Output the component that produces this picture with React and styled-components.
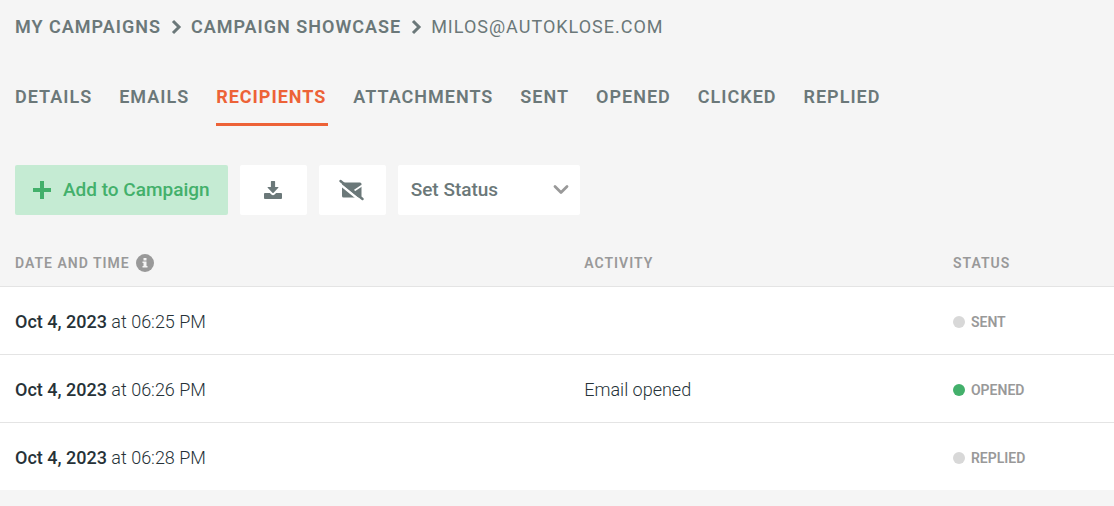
import React, { useState } from "react";
import styled, { createGlobalStyle } from "styled-components";

const GlobalStyle = createGlobalStyle`
  * {
    box-sizing: border-box;
  }

  body {
    margin: 0;
    background: #f5f5f5;
    color: #263238;
    font-family: Roboto, "Liberation Sans", sans-serif;
    font-size: 18px;
    line-height: 24px;
  }
`;

const Breadcrumbs = styled.nav`
  display: flex;
  align-items: center;
  gap: 8px;
  padding: 15px 15px 0;
  color: #6b7879;
  letter-spacing: 1px;
  text-transform: uppercase;
`;

const Crumb = styled.a`
  color: inherit;
  font-weight: 600;
  text-decoration: none;
`;

const Tabs = styled.nav`
  display: flex;
  gap: 25px;
  padding: 40px 15px 0;
`;

const Tab = styled.a`
  padding: 6px 2px 14px 0;
  border-bottom: 3px solid ${(props) => (props.$active ? "#ed6237" : "transparent")};
  color: ${(props) => (props.$active ? "#ed6237" : "#6b7879")};
  font-weight: ${(props) => (props.$active ? 700 : 600)};
  letter-spacing: 1px;
  text-decoration: none;
  text-transform: uppercase;
`;

const Toolbar = styled.div`
  display: flex;
  gap: 12px;
  padding: 39px 15px 0;
`;

const Button = styled.button`
  display: flex;
  align-items: center;
  justify-content: center;
  gap: 12px;
  height: 50px;
  padding: 0 18px;
  border: 0;
  border-radius: 2px;
  background: #c5ebd3;
  color: #43b06b;
  font: inherit;
  font-size: 19px;
  font-weight: 500;
  cursor: pointer;
`;

const IconButton = styled(Button)`
  width: 67px;
  background: #fff;
  color: #6b7879;
`;

const SelectBox = styled.div`
  position: relative;
  width: 182px;

  svg {
    position: absolute;
    top: 19px;
    right: 11px;
    color: #999;
    pointer-events: none;
  }
`;

const Select = styled.select`
  appearance: none;
  width: 100%;
  height: 50px;
  padding: 0 36px 0 13px;
  border: 0;
  border-radius: 2px;
  background: #fff;
  color: #6b7879;
  font: inherit;
  font-size: 19px;
  font-weight: 500;
`;

const Table = styled.table`
  width: 100%;
  margin-top: 26px;
  border-collapse: collapse;
  table-layout: fixed;
`;

const HeadCell = styled.th`
  width: ${(props) => props.$width};
  height: 45px;
  padding: 0 15px;
  border-bottom: 1px solid #e4e4e4;
  color: #999;
  font-size: 14px;
  font-weight: 600;
  letter-spacing: 1px;
  text-align: left;
  text-transform: uppercase;
`;

const HeadLabel = styled.span`
  display: flex;
  align-items: center;
  gap: 6px;
`;

const Row = styled.tr`
  height: 68px;
  background: #fff;

  & + & {
    border-top: 1px solid #e4e4e4;
  }
`;

const Cell = styled.td`
  padding: 3px 15px 0;
  font-weight: 300;

  strong {
    font-weight: 500;
  }
`;

const Status = styled.span`
  display: flex;
  align-items: center;
  gap: 6px;
  color: #999;
  font-size: 14px;
  font-weight: 600;
  text-transform: uppercase;
`;

const Dot = styled.span`
  width: 12px;
  height: 12px;
  border-radius: 50%;
  background: ${(props) => (props.$active ? "#43b06b" : "#d8d8d8")};
`;

const ChevronRight = () => (
  <svg width="14" height="18" viewBox="0 0 14 18" aria-hidden="true">
    <path d="M4 3l6 6-6 6" fill="none" stroke="currentColor" strokeWidth="3" />
  </svg>
);

const ChevronDown = () => (
  <svg width="16" height="12" viewBox="0 0 16 12" aria-hidden="true">
    <path
      d="M2 2.5l6 6 6-6"
      fill="none"
      stroke="currentColor"
      strokeWidth="2.8"
      strokeLinecap="round"
      strokeLinejoin="round"
    />
  </svg>
);

const PlusIcon = () => (
  <svg width="18" height="18" viewBox="0 0 18 18" aria-hidden="true">
    <path d="M7 0h4v7h7v4h-7v7H7v-7H0V7h7z" fill="currentColor" />
  </svg>
);

const DownloadIcon = () => (
  <svg width="18" height="18" viewBox="0 0 18 18" fill="currentColor" aria-hidden="true">
    <path d="M7.5 0h3q.6 0 .6.6V6h2.9q.9 0 .3.7l-4.7 5.1q-.6.6-1.2 0L3.7 6.7Q3.1 6 4 6h2.9V.6q0-.6.6-.6z" />
    <path d="M.9 12h5l1.5 1.6q1.6 1.5 3.2 0l1.5-1.6h5q.9 0 .9.9v4.2q0 .9-.9.9H.9q-.9 0-.9-.9v-4.2q0-.9.9-.9z" />
  </svg>
);

const MailOffIcon = () => (
  <svg width="26" height="22" viewBox="0 0 26 22" aria-hidden="true">
    <path
      d="M4.5 3.5H21q1.500 0 1.500 1.500v12q0 1.500-1.500 1.500H4.500q-1.500 0-1.500-1.500V5q0-1.500 1.500-1.500z"
      fill="currentColor"
    />
    <path d="M15.500 11.500l7.500-5" stroke="#fff" strokeWidth="1.6" />
    <path d="M0 4.500l21 17" stroke="#fff" strokeWidth="2.4" />
    <path
      d="M1.5 2l22 18"
      stroke="currentColor"
      strokeWidth="2.4"
      strokeLinecap="round"
    />
  </svg>
);

const InfoIcon = () => (
  <svg width="18" height="18" viewBox="0 0 18 18" aria-hidden="true">
    <circle cx="9" cy="9" r="9" fill="currentColor" />
    <path d="M7.5 4h3v2.5h-3zM6.5 7.5h4V12h1v1.5h-5V12h1V9h-1z" fill="#f5f5f5" />
  </svg>
);

const tabs = [
  "Details",
  "Emails",
  "Recipients",
  "Attachments",
  "Sent",
  "Opened",
  "Clicked",
  "Replied",
];

const events = [
  { date: "Oct 4, 2023", time: "06:25 PM", activity: "", status: "Sent" },
  { date: "Oct 4, 2023", time: "06:26 PM", activity: "Email opened", status: "Opened" },
  { date: "Oct 4, 2023", time: "06:28 PM", activity: "", status: "Replied" },
];

function App() {
  const [activeTab, setActiveTab] = useState("Recipients");

  return (
    <>
      <GlobalStyle />
      <Breadcrumbs aria-label="Breadcrumb">
        <Crumb href="#campaigns">My campaigns</Crumb>
        <ChevronRight />
        <Crumb href="#showcase">Campaign showcase</Crumb>
        <ChevronRight />
        <span>milos@autoklose.com</span>
      </Breadcrumbs>
      <Tabs aria-label="Campaign">
        {tabs.map((tab) => (
          <Tab
            key={tab}
            href={`#${tab.toLowerCase()}`}
            $active={tab === activeTab}
            onClick={() => setActiveTab(tab)}
          >
            {tab}
          </Tab>
        ))}
      </Tabs>
      <Toolbar>
        <Button type="button">
          <PlusIcon />
          Add to Campaign
        </Button>
        <IconButton type="button" aria-label="Download">
          <DownloadIcon />
        </IconButton>
        <IconButton type="button" aria-label="Unsubscribe">
          <MailOffIcon />
        </IconButton>
        <SelectBox>
          <Select aria-label="Set Status" defaultValue="">
            <option value="">Set Status</option>
            <option value="sent">Sent</option>
            <option value="opened">Opened</option>
            <option value="replied">Replied</option>
          </Select>
          <ChevronDown />
        </SelectBox>
      </Toolbar>
      <Table>
        <thead>
          <tr>
            <HeadCell $width="51.1%">
              <HeadLabel>
                Date and time
                <InfoIcon />
              </HeadLabel>
            </HeadCell>
            <HeadCell $width="33.1%">Activity</HeadCell>
            <HeadCell>Status</HeadCell>
          </tr>
        </thead>
        <tbody>
          {events.map((event) => (
            <Row key={event.time}>
              <Cell>
                <strong>{event.date}</strong> at {event.time}
              </Cell>
              <Cell>{event.activity}</Cell>
              <Cell>
                <Status>
                  <Dot $active={event.status === "Opened"} />
                  {event.status}
                </Status>
              </Cell>
            </Row>
          ))}
        </tbody>
      </Table>
    </>
  );
}

export default App;
